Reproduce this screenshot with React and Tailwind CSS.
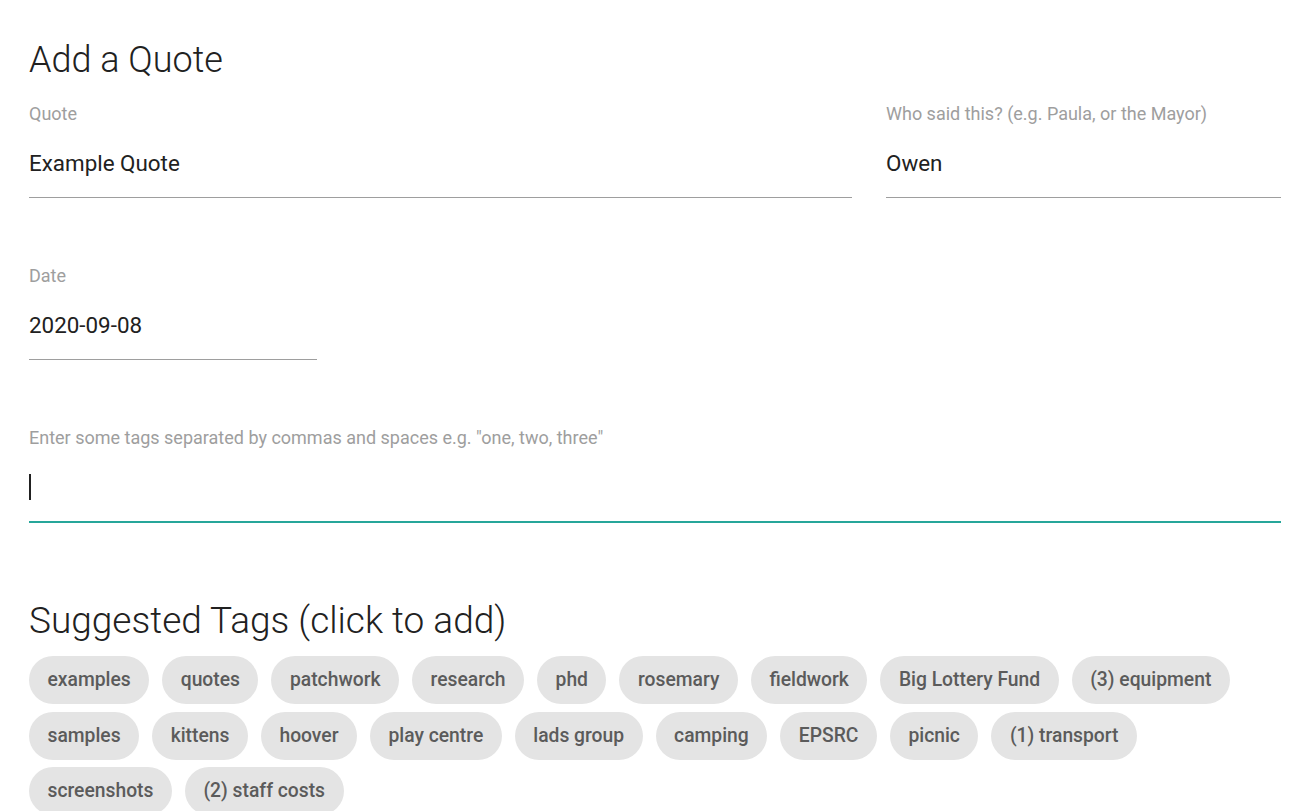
import React from "react";

const tags = ["examples","quotes","patchwork","research","phd","rosemary","fieldwork","Big Lottery Fund","(3) equipment","samples","kittens","hoover","play centre","lads group","camping","EPSRC","picnic","(1) transport","screenshots","(2) staff costs"];

function Field({ label, value, className = "" }) {
  return (
    <div className={className}>
      <div className="text-[18px] leading-[20px] text-[#9e9e9e]">{label}</div>
      <div className="mt-[25.5px] h-[26px] text-[22.4px] leading-[26px] text-[#212121]">{value}</div>
      <div className="mt-[21.5px] border-b border-[#9e9e9e]" />
    </div>
  );
}

export default function App() {
  return (
    <div className="h-[811px] overflow-hidden bg-white px-[29px] pt-[38px] font-['Roboto',sans-serif]">
      <h4 className="text-[36px] leading-[44px] font-light text-[#212121]">Add a Quote</h4>
      <div className="mt-[22px] flex gap-[34px]">
        <Field className="w-[823px]" label="Quote" value="Example Quote" />
        <Field className="flex-1" label="Who said this? (e.g. Paula, or the Mayor)" value="Owen" />
      </div>
      <Field className="mt-[68px] w-[288px]" label="Date" value="2020-09-08" />
      <div className="mt-[68px]">
        <div className="text-[18px] leading-[20px] text-[#9e9e9e]">Enter some tags separated by commas and spaces e.g. "one, two, three"</div>
        <div className="mt-[26px] h-[26px] flex items-center">
          <div className="w-[2px] h-[26px] bg-[#212121]" />
        </div>
        <div className="mt-[21px] h-[2px] bg-[#26a69a]" />
      </div>
      <h4 className="mt-[76px] text-[37px] leading-[44px] font-light text-[#212121]">Suggested Tags (click to add)</h4>
      <div className="mt-[13px] flex flex-wrap gap-x-[13px] gap-y-[7.5px] pr-[40px]">
        {tags.map((t) => (
          <div key={t} className="h-[48px] cursor-pointer whitespace-nowrap rounded-full bg-[#e4e4e4] px-[18.5px] text-[19.3px] leading-[48px] font-medium text-[#5b5b5b]">{t}</div>
        ))}
      </div>
    </div>
  );
}
